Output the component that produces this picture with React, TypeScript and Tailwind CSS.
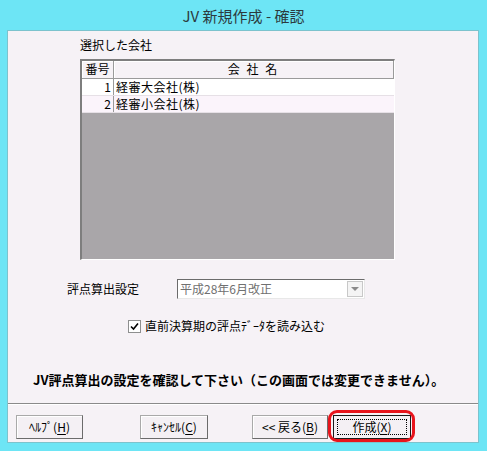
const font = "font-['Noto_Sans_CJK_JP','Noto_Sans_CJK_SC',sans-serif]";

const companies = [
  { no: 1, name: "経審大会社(株)" },
  { no: 2, name: "経審小会社(株)" },
];

const Btn = ({
  label,
  accel,
  width,
  isDefault,
}: {
  label: string;
  accel: string;
  width: string;
  isDefault?: boolean;
}) => {
  const text = (
    <span>
      {label}(<span className="underline underline-offset-2">{accel}</span>)
    </span>
  );
  return (
    <div
      className={`${width} h-[24px] flex items-center justify-center bg-[#f4f0f4] text-[12px] leading-[14px] text-black border ${
        isDefault
          ? "border-[#1a1a1a] p-[3px]"
          : "border-[#a9a9a9] border-r-[#6b6b6b] border-b-[#6b6b6b] shadow-[inset_1px_1px_0_#ffffff]"
      }`}
    >
      {isDefault ? (
        <div className="w-full h-full flex items-center justify-center border border-dotted border-black">{text}</div>
      ) : (
        text
      )}
    </div>
  );
};

const App = () => {
  return (
    <div className={`w-[487px] h-[451px] bg-[#6de5f5] flex flex-col ${font}`}>
      {/* Title bar */}
      <div className="h-[30px] flex items-center justify-center text-[15px] text-[#2c3a3e] pt-[2px]">
        JV 新規作成 - 確認
      </div>

      {/* Client area */}
      <div className="ml-[7px] w-[472px] mb-[8px] flex-1 border border-[#7cc3cd] bg-[#f6f2f6] flex flex-col text-[12px] text-black">
        <div className="pl-[72px] pt-[6px] leading-[16px]">選択した会社</div>

        {/* Company list */}
        <div className="ml-[72px] mt-[6px] w-[315px] h-[201px] border-t-2 border-l-2 border-[#7e7e7e] border-r border-b border-r-white border-b-white bg-[#a9a6a9] flex flex-col">
          <div className="flex h-[18px] leading-[16px] bg-[#f6f2f6]">
            <div className="w-[32px] text-center border-r border-b border-[#9a9a9a] shadow-[inset_1px_1px_0_#ffffff]">番号</div>
            <div className="flex-1 text-center border-r border-b border-[#9a9a9a] shadow-[inset_1px_1px_0_#ffffff] tracking-[2px]">
              会 社 名
            </div>
          </div>
          {companies.map((c, i) => (
            <div
              key={c.no}
              className={`flex h-[17px] leading-[16px] border-b border-[#e6e0e6] ${i % 2 === 0 ? "bg-white" : "bg-[#fbf4fb]"}`}
            >
              <div className="w-[32px] text-right pr-[2px] border-r border-[#9a9a9a]">{c.no}</div>
              <div className="flex-1 pl-[2px] tracking-[0.5px]">{c.name}</div>
            </div>
          ))}
        </div>

        {/* Setting select */}
        <div className="flex items-center mt-[19px] h-[20px]">
          <div className="pl-[59px] w-[169px] leading-[16px]">評点算出設定</div>
          <div className="w-[188px] h-[20px] border-t border-l border-[#6b6b6b] border-r border-b border-r-[#e8e8e8] border-b-[#e8e8e8] bg-white flex items-center">
            <div className="flex-1 pl-[2px] text-[#707070] leading-[16px]">平成28年6月改正</div>
            <div className="w-[16px] h-[16px] mr-[1px] border border-[#c8c8c8] bg-[#f4f4f4] flex items-center justify-center">
              <svg width="8" height="4" viewBox="0 0 8 4">
                <polygon points="0,0 8,0 4,4" fill="#8a8a8a" />
              </svg>
            </div>
          </div>
        </div>

        {/* Checkbox */}
        <div className="flex items-center mt-[19px] h-[16px] pl-[120px]">
          <div className="w-[13px] h-[13px] border border-[#8e8f8f] bg-white flex items-center justify-center">
            <svg width="9" height="9" viewBox="0 0 9 9">
              <path d="M1 4.5 L3.5 7 L8 1.5" stroke="#000" strokeWidth="1.6" fill="none" />
            </svg>
          </div>
          <div className="ml-[4px] leading-[16px]">直前決算期の評点ﾃﾞｰﾀを読み込む</div>
        </div>

        {/* Message */}
        <div className="mt-[37px] pl-[25px] h-[18px] leading-[18px] text-[13px] font-bold">
          JV評点算出の設定を確認して下さい（この画面では変更できません）。
        </div>

        {/* Separator */}
        <div className="mt-[14px] border-t border-[#8a8a8a] border-b border-b-white" />

        {/* Buttons */}
        <div className="flex mt-[10px]">
          <div className="ml-[8px]">
            <Btn label="ﾍﾙﾌﾟ" accel="H" width="w-[67px]" />
          </div>
          <div className="ml-[57px]">
            <Btn label="ｷｬﾝｾﾙ" accel="C" width="w-[68px]" />
          </div>
          <div className="ml-[44px]">
            <Btn label="<< 戻る" accel="B" width="w-[76px]" />
          </div>
          <div className="ml-[5px] relative">
            <Btn label="作成" accel="X" width="w-[78px]" isDefault />
            <div className="absolute -left-[5px] -right-[4px] -top-[5px] -bottom-[3px] rounded-[9px] border-[3px] border-[#e8141c]" />
          </div>
        </div>
      </div>
    </div>
  );
};

export default App;
